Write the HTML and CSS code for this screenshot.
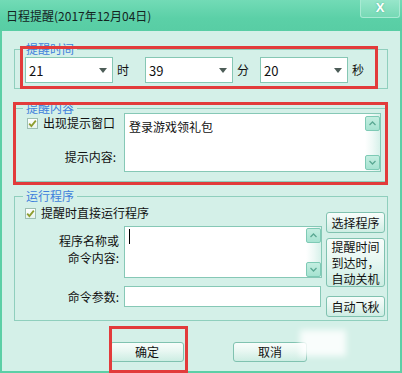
FILE: index.html
```html
<!DOCTYPE html>
<html lang="zh-CN">
<head>
<meta charset="utf-8">
<title>日程提醒</title>
<link rel="stylesheet" href="styles.css">
</head>
<body>
<div class="window">
  <div class="titlebar">
    <span class="title">日程提醒(2017年12月04日)</span>
    <div class="close">X</div>
  </div>
  <div class="client">
    <div class="group g-time">
      <span class="legend">提醒时间</span>
      <div class="time-row">
        <div class="unit"><div class="combo"><span>21</span><i class="arrow"></i></div><span class="unit-label">时</span></div>
        <div class="unit"><div class="combo"><span>39</span><i class="arrow"></i></div><span class="unit-label">分</span></div>
        <div class="unit"><div class="combo"><span>20</span><i class="arrow"></i></div><span class="unit-label">秒</span></div>
      </div>
    </div>

    <div class="group g-content">
      <span class="legend">提醒内容</span>
      <div class="left-col">
        <div class="check-row">
          <span class="checkbox"><svg width="11" height="11" viewBox="0 0 11 11"><path d="M2.2 5.6 L4.4 8 L8.8 2.6" fill="none" stroke="#8d9d2e" stroke-width="1.8"/></svg></span>
          <span>出现提示窗口</span>
        </div>
        <div class="field-label fl-tip">提示内容:</div>
      </div>
      <div class="textarea ta1">
        <div class="ta-text">登录游戏领礼包</div>
        <div class="scrollbar sb1">
          <span class="sbtn"><svg width="13" height="13" viewBox="0 0 13 13"><path d="M3.5 8 L6.5 5 L9.5 8" fill="none" stroke="#5aa893" stroke-width="1.3"/></svg></span>
          <span class="sbtn"><svg width="13" height="13" viewBox="0 0 13 13"><path d="M3.5 5 L6.5 8 L9.5 5" fill="none" stroke="#5aa893" stroke-width="1.3"/></svg></span>
        </div>
      </div>
    </div>

    <div class="group g-run">
      <span class="legend">运行程序</span>
      <div class="run-main">
        <div class="check-row run-check">
          <span class="checkbox"><svg width="11" height="11" viewBox="0 0 11 11"><path d="M2.2 5.6 L4.4 8 L8.8 2.6" fill="none" stroke="#8d9d2e" stroke-width="1.8"/></svg></span>
          <span>提醒时直接运行程序</span>
        </div>
        <div class="run-row r-cmd">
          <div class="field-label two">程序名称或<br>命令内容:</div>
          <div class="textarea ta2">
            <div class="ta-text"><span class="caret"></span></div>
            <div class="scrollbar sb2">
              <span class="sbtn"><svg width="13" height="13" viewBox="0 0 13 13"><path d="M3.5 8 L6.5 5 L9.5 8" fill="none" stroke="#5aa893" stroke-width="1.3"/></svg></span>
              <span class="sbtn"><svg width="13" height="13" viewBox="0 0 13 13"><path d="M3.5 5 L6.5 8 L9.5 5" fill="none" stroke="#5aa893" stroke-width="1.3"/></svg></span>
            </div>
          </div>
        </div>
        <div class="run-row r-arg">
          <div class="field-label">命令参数:</div>
          <div class="input"></div>
        </div>
      </div>
      <div class="run-buttons">
        <button class="btn side">选择程序</button>
        <button class="btn side tall">提醒时间<br>到达时，<br>自动关机</button>
        <button class="btn side">自动飞秋</button>
      </div>
    </div>

    <div class="footer">
      <button class="btn main">确定</button>
      <button class="btn main">取消</button>
    </div>
  </div>

  <div class="watermark"></div>
  <div class="redbox r1"></div>
  <div class="redbox r2"></div>
  <div class="redbox r3"></div>
</div>
</body>
</html>
```

FILE: styles.css
```css
* { box-sizing: border-box; }
html, body { margin: 0; padding: 0; background: #ffffff; }
body {
  font-family: "Noto Sans CJK SC", "Noto Sans", sans-serif;
  font-size: 12px;
  color: #111;
}
.window {
  position: relative;
  width: 402px;
  height: 373px;
  overflow: hidden;
  background: #5ccfa6;
}
.titlebar {
  height: 31px;
  display: flex;
  align-items: flex-start;
  background: linear-gradient(#72dbb6, #5bd0a7 60%, #58cda4);
}
.title {
  margin: 8px 0 0 6px;
  font-size: 12px;
  line-height: 16px;
  color: #14241f;
}
.close {
  margin-left: auto;
  margin-right: 2px;
  width: 40px;
  height: 18px;
  background: linear-gradient(#97e6ca, #76d9b5);
  border: 1px solid #a8ead3;
  border-top: none;
  border-radius: 0 0 3px 3px;
  color: #fff;
  font-family: "Liberation Sans", sans-serif;
  font-weight: bold;
  font-size: 13px;
  line-height: 16px;
  text-align: center;
  text-shadow: 0 0 2px #4fb690;
}
.client {
  height: 340px;
  margin: 0 2px;
  background: #d4f0e8;
  padding: 18px 12px 0;
}
.group {
  position: relative;
  border: 1px solid #8fcfbd;
}
.legend {
  position: absolute;
  top: -8px;
  left: 8px;
  padding: 0 3px;
  background: #d4f0e8;
  color: #3f7fdc;
  font-size: 12px;
  line-height: 14px;
}
.g-time {
  height: 40px;
  padding: 7px 0 0 10px;
}
.time-row {
  display: grid;
  grid-template-columns: 120px 115px auto;
}
.unit {
  display: flex;
  align-items: center;
}
.combo {
  width: 88px;
  height: 26px;
  background: #fff;
  border: 1px solid #86c7b4;
  display: flex;
  align-items: center;
  justify-content: space-between;
  padding: 0 5px 0 3px;
  font-size: 13px;
}
.arrow {
  width: 0;
  height: 0;
  border-left: 4px solid transparent;
  border-right: 4px solid transparent;
  border-top: 5px solid #4d5d58;
}
.unit-label {
  margin-left: 4px;
  line-height: 26px;
}
.g-content {
  margin-top: 19px;
  height: 74px;
  display: flex;
  padding: 4px 6px 0 12px;
}
.left-col {
  width: 97px;
}
.check-row {
  display: flex;
  align-items: center;
  line-height: 16px;
  margin-top: 2px;
}
.checkbox {
  width: 11px;
  height: 11px;
  margin-right: 5px;
  border: 1px solid #9dbfb2;
  background: linear-gradient(#ffffff, #e6f3ee);
  position: relative;
  display: inline-block;
}
.checkbox svg {
  position: absolute;
  left: -1px;
  top: -1px;
}
.field-label {
  text-align: right;
  line-height: 16px;
}
.fl-tip {
  margin-top: 18px;
  padding-right: 8px;
}
.textarea {
  display: flex;
  background: #fff;
  border: 1px solid #86c8b6;
}
.ta1 {
  width: 257px;
  height: 59px;
}
.ta-text {
  flex: 1;
  padding: 5px 0 0 4px;
  line-height: 16px;
  font-size: 12px;
}
.scrollbar {
  width: 15px;
  display: flex;
  flex-direction: column;
  justify-content: space-between;
  background: linear-gradient(90deg, #ffffff, #eef9f6 50%, #d7f1ea);
}
.sb1 { padding: 2px 0 1px; }
.sb2 { padding: 1px 0 0; }
.sbtn {
  width: 15px;
  height: 15px;
  background: linear-gradient(#c4eee1, #a6e3d1);
  border: 1px solid #7ecab5;
  border-radius: 2px;
  display: flex;
  align-items: center;
  justify-content: center;
}
.g-run {
  margin-top: 14px;
  height: 125px;
  display: flex;
  padding-right: 2px;
}
.run-main {
  width: 307px;
  padding-top: 8px;
}
.run-check {
  margin-top: 0;
  padding-left: 10px;
}
.run-row {
  display: flex;
}
.r-cmd { margin-top: 5px; }
.r-arg { margin-top: 8px; align-items: center; }
.run-row .field-label {
  width: 109px;
  padding-right: 5px;
}
.field-label.two {
  padding-top: 6px;
  line-height: 17px;
}
.ta2 {
  width: 198px;
  height: 52px;
}
.ta2 .ta-text { padding: 2px 0 0 4px; }
.caret {
  display: block;
  width: 1px;
  height: 15px;
  background: #000;
}
.input {
  width: 197px;
  height: 21px;
  background: #fff;
  border: 1px solid #86c8b6;
}
.run-buttons {
  margin-left: 4px;
  width: 59px;
  padding-top: 15px;
  display: flex;
  flex-direction: column;
}
.btn {
  font-family: "Noto Sans CJK SC", "Noto Sans", sans-serif;
  font-size: 12px;
  color: #111;
  border: 1px solid #80c2b0;
  border-radius: 3px;
  background: linear-gradient(#f8fdfb, #e8f7f2 45%, #cdede3);
  padding: 0;
  margin: 0;
}
.side {
  height: 21px;
  line-height: 16px;
}
.side.tall {
  height: 49px;
  margin-top: 5px;
  margin-bottom: 9px;
}
.footer {
  display: flex;
  gap: 49px;
  margin-top: 21px;
  padding-left: 96px;
}
.main {
  width: 74px;
  height: 20px;
  line-height: 16px;
}
.redbox {
  position: absolute;
  border: 3px solid #e23b3b;
}
.r1 { left: 20px; top: 46px; width: 358px; height: 43px; }
.r2 { left: 13px; top: 102px; width: 375px; height: 83px; }
.r3 { left: 109px; top: 326px; width: 79px; height: 47px; }
.watermark {
  position: absolute;
  left: 300px;
  top: 330px;
  width: 46px;
  height: 26px;
  background: rgba(255, 255, 255, 0.85);
  filter: blur(3px);
}
```
